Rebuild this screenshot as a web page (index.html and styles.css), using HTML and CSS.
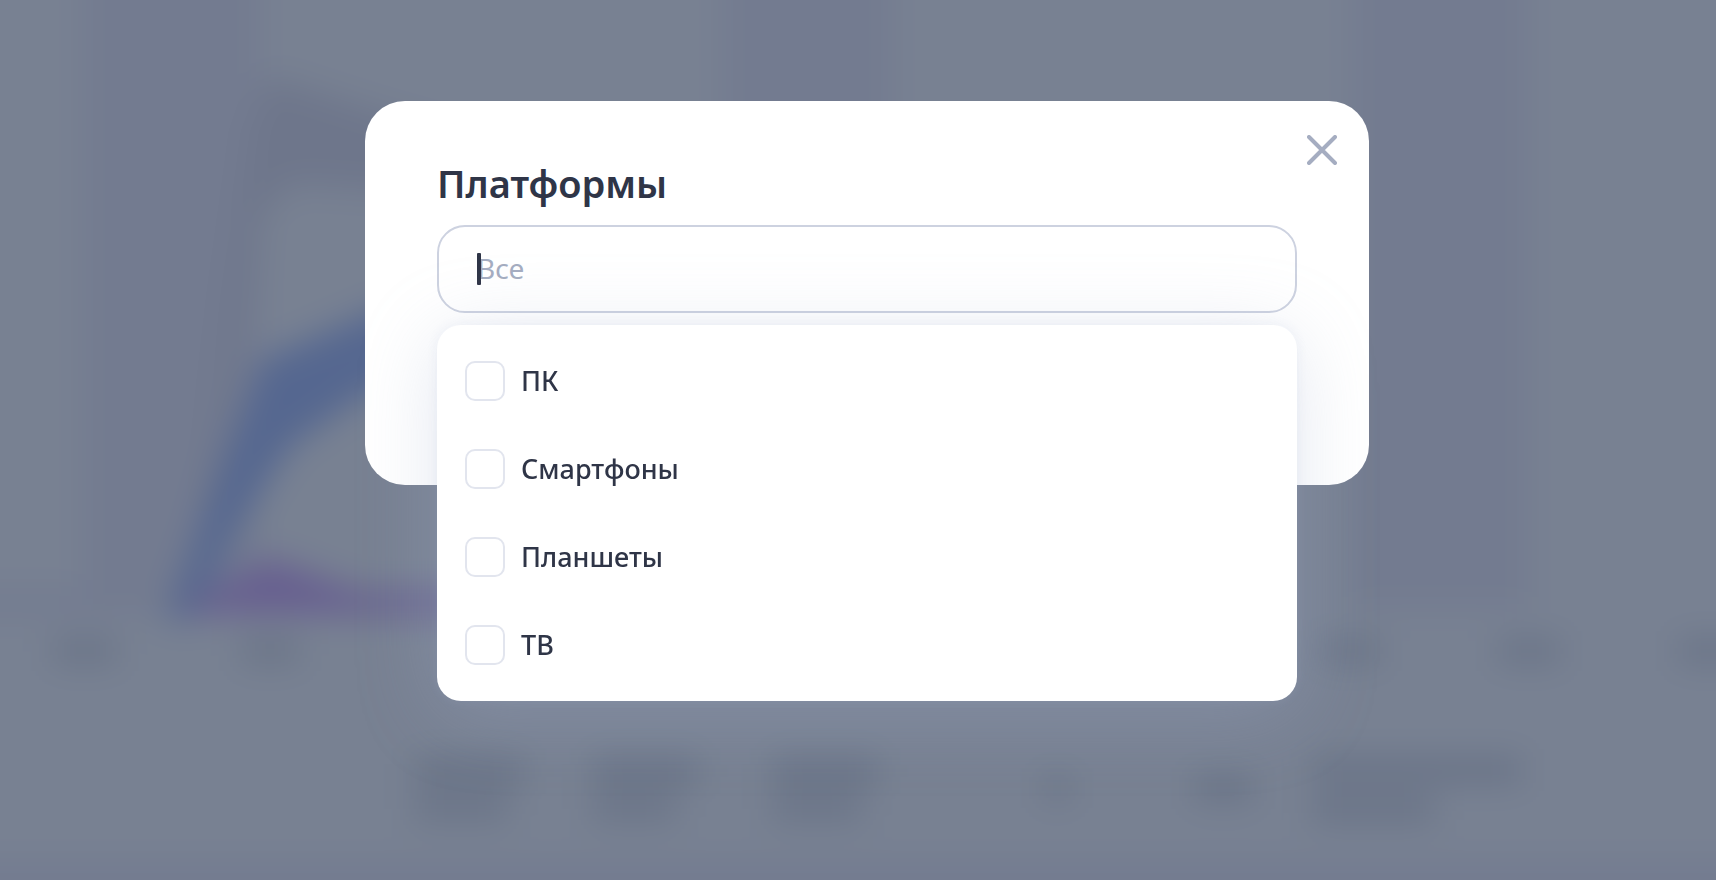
FILE: index.html
```html
<!DOCTYPE html>
<html lang="ru">
<head>
    <meta charset="UTF-8">
    <meta name="viewport" content="width=device-width, initial-scale=1.0">
    <title>Платформы</title>
    <link rel="stylesheet" href="styles.css">
</head>
<body>
    <!-- Blurred chart behind the modal -->
    <svg class="backdrop" viewBox="0 0 1716 880" preserveAspectRatio="none" aria-hidden="true">
        <defs>
            <filter id="blur" filterUnits="userSpaceOnUse" x="-100" y="-100" width="1916" height="1080" color-interpolation-filters="sRGB">
                <feGaussianBlur stdDeviation="17"/>
            </filter>
        </defs>
        <g filter="url(#blur)">
            <rect x="-100" y="-100" width="1916" height="1080" fill="#788192"/>
            <g fill="#737b90">
                <rect x="82" y="-90" width="178" height="698"/>
                <rect x="722" y="-90" width="170" height="698"/>
                <rect x="1352" y="-90" width="176" height="698"/>
                <rect x="-90" y="590" width="640" height="26"/>
                <rect x="-90" y="862" width="1900" height="100"/>
            </g>
            <polygon fill="#6e768b" points="190,600 228,290 250,130 268,76 380,112 480,140 480,200 380,190 290,184 262,216 246,310 225,420"/>
            <polygon fill="#556790" points="166,620 220,470 262,360 365,316 480,270 480,350 365,394 290,446 235,530 192,620"/>
            <polygon fill="#675f90" points="190,602 270,558 360,592 480,592 480,614 190,614"/>
            <g fill="#667084">
                <rect x="53" y="641" width="64" height="20"/>
                <rect x="241" y="641" width="58" height="20"/>
                <rect x="1320" y="641" width="60" height="20"/>
                <rect x="1498" y="641" width="62" height="20"/>
                <rect x="1678" y="641" width="62" height="20"/>
                <rect x="414" y="759" width="110" height="24"/>
                <rect x="414" y="798" width="94" height="20"/>
                <rect x="592" y="759" width="106" height="24"/>
                <rect x="592" y="798" width="84" height="20"/>
                <rect x="772" y="759" width="106" height="24"/>
                <rect x="772" y="798" width="90" height="20"/>
                <rect x="1043" y="778" width="28" height="20"/>
                <rect x="1193" y="777" width="60" height="22"/>
                <rect x="1312" y="759" width="210" height="22"/>
                <rect x="1312" y="798" width="122" height="22"/>
            </g>
        </g>
    </svg>

    <main class="overlay">
        <section class="modal" role="dialog" aria-labelledby="modalTitle">
            <button class="close-btn" type="button" aria-label="Закрыть">
                <svg viewBox="0 0 30 30" width="30" height="30">
                    <path d="M2 2L28 28M28 2L2 28" fill="none" stroke="currentColor" stroke-width="4" stroke-linecap="round"/>
                </svg>
            </button>
            <h1 class="title" id="modalTitle">Платформы</h1>
            <div class="select">
                <input class="select-input" type="text" placeholder="Все" aria-labelledby="modalTitle">
                <span class="caret"></span>
                <div class="dropdown">
                    <label class="option"><input type="checkbox" class="checkbox"><span class="option-text">ПК</span></label>
                    <label class="option"><input type="checkbox" class="checkbox"><span class="option-text">Смартфоны</span></label>
                    <label class="option"><input type="checkbox" class="checkbox"><span class="option-text">Планшеты</span></label>
                    <label class="option"><input type="checkbox" class="checkbox"><span class="option-text">ТВ</span></label>
                </div>
            </div>
        </section>
    </main>
</body>
</html>
```
FILE: styles.css
```css
* {
    box-sizing: border-box;
}

body {
    margin: 0;
    min-height: 100vh;
    overflow: hidden;
    background-color: #788192;
    color: #2f3547;
    font-family: "Noto Sans", "Open Sans", sans-serif;
}

.backdrop {
    position: fixed;
    top: 0;
    left: 0;
    width: 100%;
    height: 100%;
}

.overlay {
    position: relative;
    display: flex;
    justify-content: center;
    padding: 101px 24px 24px 42px;
}

/* Modal */
.modal {
    position: relative;
    width: 100%;
    max-width: 1004px;
    padding: 56px 72px 172px;
    border-radius: 40px;
    background-color: #fff;
}

.close-btn {
    position: absolute;
    top: 24px;
    right: 22px;
    display: flex;
    padding: 10px;
    border: none;
    background: none;
    color: #a5adc1;
    cursor: pointer;
}

.title {
    margin: 0 0 16px;
    font-size: 38px;
    line-height: 52px;
    font-weight: 600;
}

/* Select */
.select {
    position: relative;
}

.select-input {
    display: block;
    width: 100%;
    height: 88px;
    padding: 0 38px 2px;
    border: 2px solid #cdd2e0;
    border-radius: 28px;
    outline: none;
    background-color: #fff;
    color: inherit;
    font-family: inherit;
    font-size: 28px;
}

.select-input::placeholder {
    color: #a5adc1;
    opacity: 1;
}

.caret {
    position: absolute;
    top: 28px;
    left: 40px;
    width: 4px;
    height: 32px;
    border-radius: 1px;
    background-color: #2f3547;
}

.dropdown {
    position: absolute;
    top: 100px;
    left: 0;
    right: 0;
    padding: 12px 0;
    border-radius: 24px;
    background-color: #fff;
    box-shadow: 0 12px 80px rgba(162, 174, 206, 0.3), 0 0 12px rgba(162, 174, 206, 0.15);
}

.option {
    display: flex;
    align-items: center;
    gap: 16px;
    height: 88px;
    padding: 0 28px;
    font-size: 27px;
    font-weight: 500;
    cursor: pointer;
}

.option-text {
    padding-bottom: 2px;
}

.checkbox {
    appearance: none;
    width: 40px;
    height: 40px;
    margin: 0;
    border: 2px solid #e2e5ee;
    border-radius: 10px;
    background-color: #fff;
    cursor: pointer;
}

.checkbox:checked {
    background-color: #cdd2e0;
}
```
